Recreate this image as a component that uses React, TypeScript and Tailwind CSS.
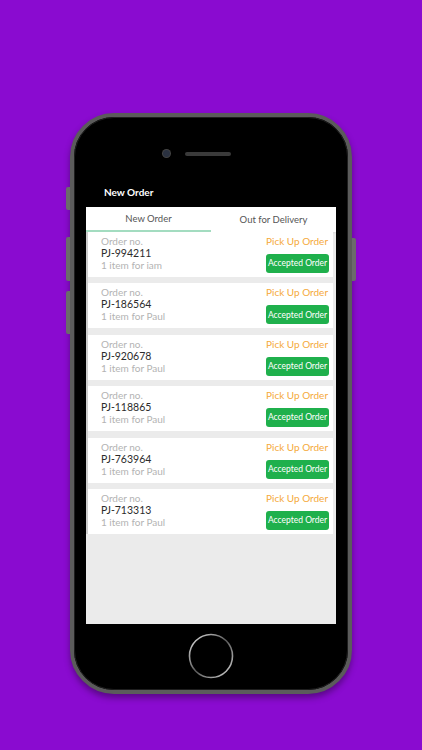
import React from "react";

interface IOrder {
  id: string;
  customer: string;
}

const orders: IOrder[] = [
  { id: "PJ-994211", customer: "iam" },
  { id: "PJ-186564", customer: "Paul" },
  { id: "PJ-920678", customer: "Paul" },
  { id: "PJ-118865", customer: "Paul" },
  { id: "PJ-763964", customer: "Paul" },
  { id: "PJ-713313", customer: "Paul" },
];

const OrderCard = ({ id, customer }: IOrder) => {
  return (
    <div className="flex h-[45px] justify-between bg-white pl-[13px] pr-[4px]">
      <div className="flex flex-col pt-[3px] text-[10px] leading-[12px]">
        <span className="text-[#b3b3b3]">Order no.</span>
        <span className="text-[10.5px] text-[#2b2b2b]">{id}</span>
        <span className="text-[#b3b3b3]">1 item for {customer}</span>
      </div>
      <div className="flex w-[63px] flex-col items-start pt-[3px]">
        <span className="whitespace-nowrap text-[10px] leading-[12px] text-[#f5a93a]">
          Pick Up Order
        </span>
        <button className="mt-[7px] flex h-[19px] w-[63px] items-center justify-center rounded-[3px] bg-[#1fb04c] text-[8.5px] whitespace-nowrap text-white">
          Accepted Order
        </button>
      </div>
    </div>
  );
};

const HomeButton = () => (
  <svg width="46" height="46" viewBox="0 0 46 46">
    <defs>
      <linearGradient id="ring" x1="0" y1="0" x2="1" y2="1">
        <stop offset="0" stopColor="#e6e6e6" />
        <stop offset="0.5" stopColor="#5a5a5a" />
        <stop offset="1" stopColor="#d8d8d8" />
      </linearGradient>
    </defs>
    <circle cx="23" cy="23" r="21.5" fill="#000" stroke="url(#ring)" strokeWidth="1.6" />
  </svg>
);

const App = () => {
  return (
    <div
      className="h-[750px] w-[422px] overflow-hidden bg-[#8a0bd0] pt-[113px] pl-[70px]"
      style={{ fontFamily: "Lato, 'Open Sans', sans-serif" }}
    >
      <div className="relative h-[581px] w-[282px] rounded-[44px] border-[4px] border-[#5b5b5b] bg-black shadow-[0_4px_6px_rgba(0,0,0,0.35)]">
        {/* side buttons */}
        <div className="absolute -left-[8px] top-[70px] h-[23px] w-[4px] rounded-l-[2px] bg-[#6b6b6b]" />
        <div className="absolute -left-[8px] top-[120px] h-[44px] w-[4px] rounded-l-[2px] bg-[#6b6b6b]" />
        <div className="absolute -left-[8px] top-[174px] h-[43px] w-[4px] rounded-l-[2px] bg-[#6b6b6b]" />
        <div className="absolute -right-[8px] top-[121px] h-[43px] w-[4px] rounded-r-[2px] bg-[#6b6b6b]" />

        <div className="flex h-full flex-col items-center rounded-[40px] border border-[#1e1e1e]">
          {/* camera + speaker */}
          <div className="mt-[32px] flex w-[250px] items-center">
            <div className="ml-[77px] h-[7px] w-[7px] rounded-full bg-[#2a3140] ring-1 ring-[#444]" />
            <div className="ml-[15px] h-[4px] w-[46px] rounded-full bg-[#3a3a3a]" />
          </div>

          {/* header */}
          <div className="mt-[29px] w-[250px] pl-[18px] text-[10px] font-bold leading-[12px] text-white">
            New Order
          </div>

          {/* screen */}
          <div className="mt-[9px] flex h-[417px] w-[250px] flex-col bg-[#ebebeb]">
            <div className="flex h-[25px] bg-white pt-[2px] text-[9.5px] text-[#555] shadow-[0_1px_2px_rgba(0,0,0,0.08)]">
              <div className="flex flex-1 items-center justify-center border-b-2 border-[#a3dcc0]">
                New Order
              </div>
              <div className="flex flex-1 items-center justify-center">Out for Delivery</div>
            </div>
            <div className="mr-[3px] flex flex-col gap-[6.4px] border-l-2 border-[#cdcdcd]">
              {orders.map((o) => (
                <OrderCard key={o.id} {...o} />
              ))}
            </div>
          </div>

          {/* home button */}
          <div className="mt-[9px]">
            <HomeButton />
          </div>
        </div>
      </div>
    </div>
  );
};

export default App;
